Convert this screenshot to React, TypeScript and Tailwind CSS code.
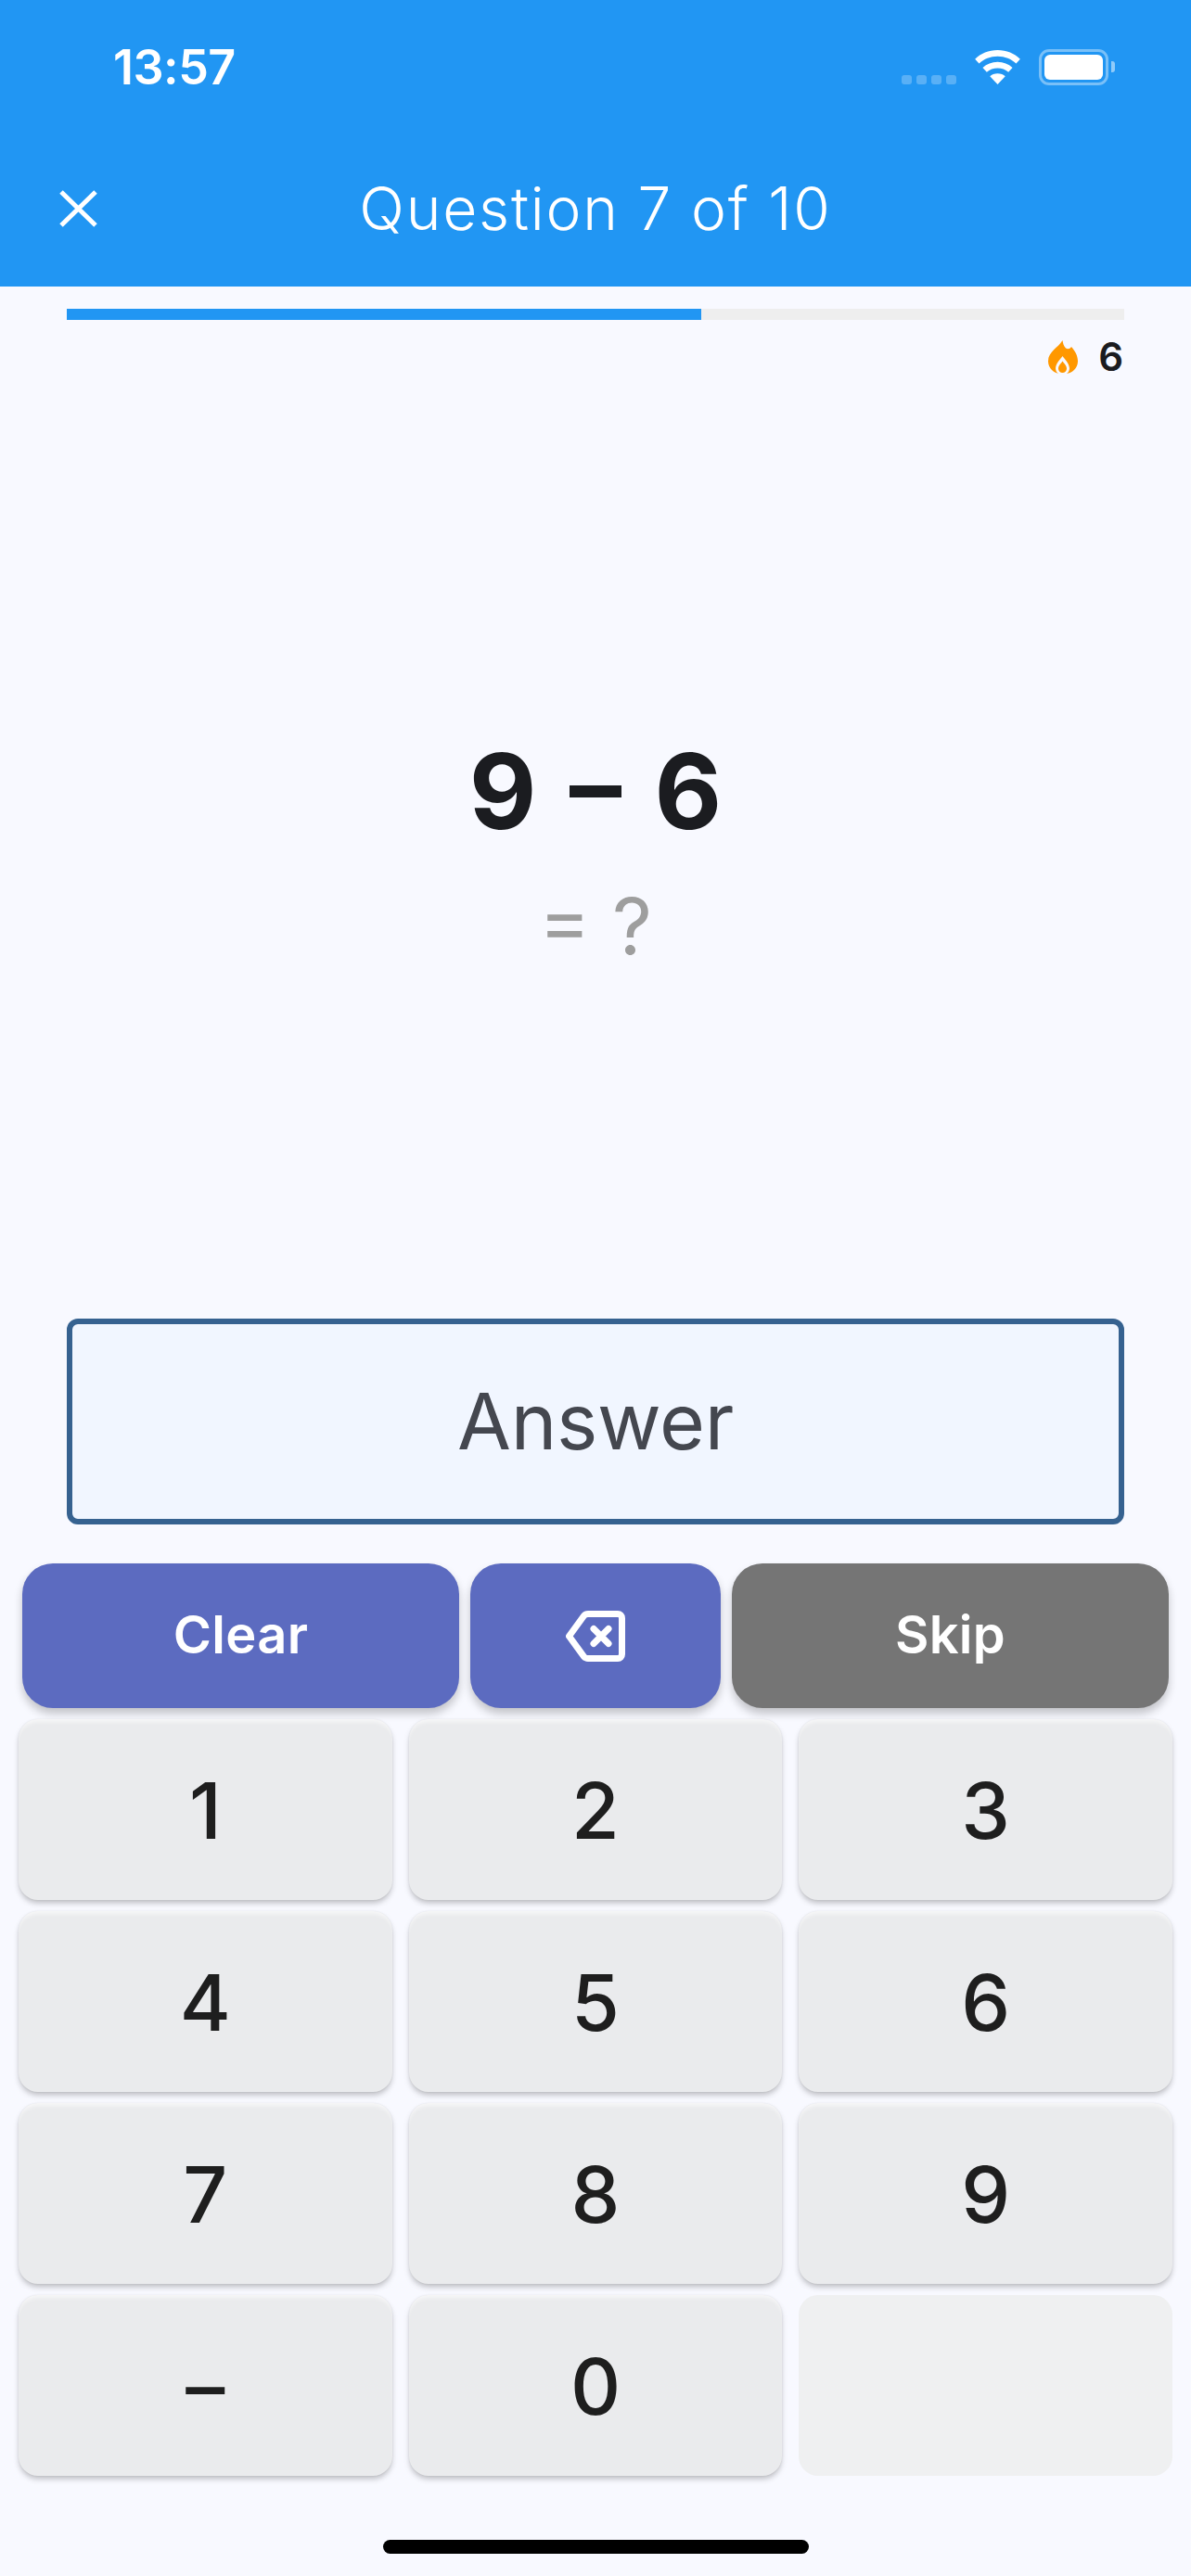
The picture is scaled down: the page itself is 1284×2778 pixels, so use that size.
const keys = ["1", "2", "3", "4", "5", "6", "7", "8", "9", "–", "0"];

function Wifi() {
  return (
    <svg width="51" height="37" viewBox="0 0 52 38" fill="#fff">
      <path d="M26 0C16 0 7.500 3.600 1 10l4.500 5C11 9.800 18 7 26 7s15 2.800 20.500 8l4.500-5C44.500 3.600 36 0 26 0z" />
      <path d="M26 13c-6.500 0-12 2.300-16.500 6.500l4.500 5C17.300 21.500 21.300 20 26 20s8.700 1.500 12 4.500l4.500-5C38 15.300 32.500 13 26 13z" />
      <path d="M26 26c-3.500 0-6.500 1.200-8.500 3L26 38l8.500-9c-2-1.800-5-3-8.500-3z" />
    </svg>
  );
}

function Flame() {
  return (
    <svg width="32" height="36" viewBox="0 0 32 36">
      <path
        d="M15.500 0C16 3 16.500 6 19 8.500c2 1.300 4.500 1 6-1.500 3.500 4 7 9 7 15.500C32 30 26 36 18 36h-4C6 36 0 30 0 22.500 0 12 11 8 15.500 0z"
        fill="#ff9800"
      />
      <path
        d="M15.500 17c2 3 7 7.500 7.500 13 0 3-1.500 5-3 6h-9c-1.500-1-3-3-3-6 .5-5.500 5.500-10 7.500-13z"
        fill="#f8f9ff"
      />
      <path
        d="M15.500 22.500c1.300 2.100 4.500 4.500 4.500 8 0 2.500-2 4.500-4.500 4.500S11 33 11 30.500c0-3.500 3.200-5.900 4.500-8z"
        fill="#ff9800"
      />
    </svg>
  );
}

function Close() {
  return (
    <svg width="41" height="40" viewBox="0 0 41 40" fill="none" stroke="#fff" strokeWidth="5">
      <path d="M2 2l37 36M39 2L2 38" />
    </svg>
  );
}

function Backspace() {
  return (
    <svg width="64" height="55" viewBox="0 0 64 55" fill="none" stroke="#fff" strokeLinecap="round" strokeLinejoin="round" strokeWidth="7">
      <path d="M24 3.500h32a4.500 4.500 0 0 1 4.500 4.500v39a4.500 4.500 0 0 1-4.500 4.500H24a6 6 0 0 1-4.500-2L3.500 27.500 19.500 5.500a6 6 0 0 1 4.500-2z" />
      <path d="M30 19.500l16 16M46 19.500l-16 16" />
    </svg>
  );
}

export default function App() {
  return (
    <div className="flex h-[2778px] w-[1284px] flex-col overflow-hidden bg-[#f8f9ff] font-['Inter',sans-serif]">
      <header className="h-[309px] shrink-0 bg-[#2196f3] text-white">
        <div className="flex h-[144px] items-start justify-between pl-[122px] pr-[89px] pt-[45px]">
          <span className="text-[52px] leading-[56px] font-semibold tracking-[-0.5px]">13:57</span>
          <div className="flex items-center gap-[19px] pt-[8px]">
            <div className="mb-[1px] flex gap-[5px] self-end opacity-25">
              {[0, 1, 2, 3].map((i) => (
                <span key={i} className="h-[10px] w-[11px] rounded-[3px] bg-white" />
              ))}
            </div>
            <Wifi />
            <div className="relative h-[39px] w-[75px] rounded-[11px] border-[3px] border-white/40 p-[3px]">
              <div className="h-full w-full rounded-[6px] bg-white" />
              <span className="absolute -right-[10px] top-[10px] h-[12px] w-[4px] rounded-r-[3px] bg-white/50" />
            </div>
          </div>
        </div>
        <div className="grid h-[165px] grid-cols-[1fr_auto_1fr] items-center pb-[3px]">
          <div className="pl-[64px]">
            <Close />
          </div>
          <span className="text-[64px] leading-[80px] font-light tracking-[1.8px]">Question 7 of 10</span>
        </div>
      </header>

      <div className="mx-[72px] mt-[24px] h-[12px] bg-[#eeeeee]">
        <div className="h-full w-3/5 bg-[#2196f3]" />
      </div>

      <div className="mt-[22px] flex items-center justify-end gap-[22px] pr-[73px]">
        <Flame />
        <span className="text-[42px] leading-[36px] font-semibold text-[#1b1c20]">6</span>
      </div>

      <div className="flex h-[1019px] flex-col items-center pt-[390px]">
        <span className="text-[112px] leading-[120px] font-bold text-[#1b1c20] [word-spacing:9px]">9 – 6</span>
        <span className="mt-[36px] text-[84px] leading-[100px] font-normal text-[#9e9e9e]">= ?</span>
      </div>

      <div className="mx-[72px] flex h-[222px] items-center justify-center rounded-[12px] border-[6px] border-[#366290] bg-[#f1f6ff]">
        <span className="text-[84px] leading-none tracking-[-0.3px] text-[#44474f]">Answer</span>
      </div>

      <div className="mt-[42px] flex gap-[12px] px-[24px]">
        <button className="flex h-[156px] w-[471px] items-center justify-center rounded-[33px] bg-[#5c6bc0] pb-[2px] text-[56px] font-semibold tracking-[0.3px] text-white shadow-[0_6px_10px_rgba(0,0,0,0.22)]">
          Clear
        </button>
        <button className="flex h-[156px] w-[270px] items-center justify-center rounded-[33px] bg-[#5c6bc0] shadow-[0_6px_10px_rgba(0,0,0,0.22)]">
          <Backspace />
        </button>
        <button className="flex h-[156px] w-[471px] items-center justify-center rounded-[33px] bg-[#757575] pb-[2px] text-[56px] font-semibold tracking-[0.3px] text-white shadow-[0_6px_10px_rgba(0,0,0,0.22)]">
          Skip
        </button>
      </div>

      <div className="mt-[12px] grid grid-cols-3 gap-x-[18px] gap-y-[12px] px-[20px]">
        {keys.map((k) => (
          <button
            key={k}
            className="flex h-[195px] items-center justify-center rounded-[21px] bg-[#eaebed] pt-[2px] text-[84px] font-[450] text-[#1e1e1e] shadow-[0_4px_6px_-1px_rgba(0,0,0,0.25),0_0_2px_rgba(0,0,0,0.08),inset_0_5px_4px_-2px_rgba(255,255,255,0.6)]"
          >
            {k}
          </button>
        ))}
        <div className="h-[195px] rounded-[21px] bg-[#eff0f1]" />
      </div>

      <div className="mx-auto mt-[69px] h-[15px] w-[459px] rounded-full bg-black" />
    </div>
  );
}
